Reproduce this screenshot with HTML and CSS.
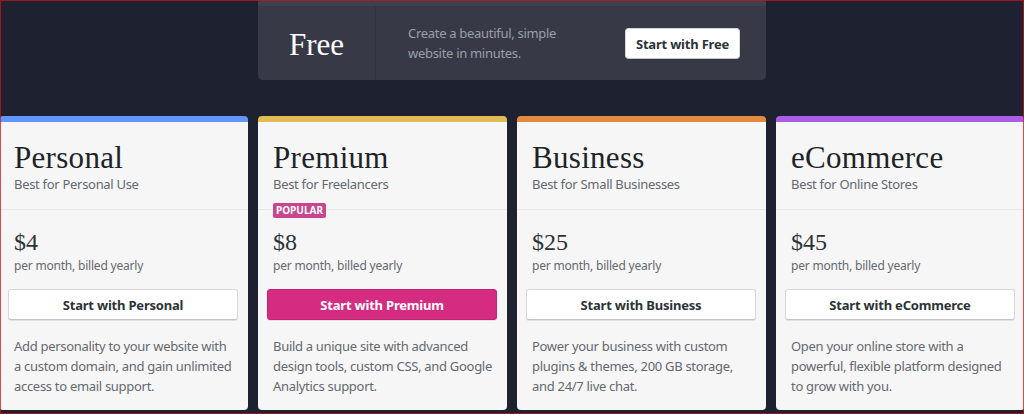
FILE: index.html
```html
<!DOCTYPE html>
<html lang="en">
<head>
<meta charset="utf-8">
<title>Plans</title>
<link rel="stylesheet" href="styles.css">
</head>
<body>
<div class="page">
  <div class="free-row">
    <div class="free-card">
      <div class="free-name">Free</div>
      <div class="free-body">
        <p class="free-desc">Create a beautiful, simple<br>website in minutes.</p>
        <button class="btn btn-free">Start with Free</button>
      </div>
    </div>
  </div>
  <div class="plans">
    <div class="plan plan-personal">
      <div class="plan-head">
        <h2 class="plan-name">Personal</h2>
        <div class="plan-sub">Best for Personal Use</div>
      </div>
      <div class="plan-body">
        <div class="price">$4</div>
        <div class="billing">per month, billed yearly</div>
        <button class="btn">Start with Personal</button>
        <p class="desc">Add personality to your website with a custom domain, and gain unlimited access to email support.</p>
      </div>
    </div>
    <div class="plan plan-premium">
      <div class="plan-head">
        <h2 class="plan-name">Premium</h2>
        <div class="plan-sub">Best for Freelancers</div>
      </div>
      <div class="plan-body">
        <span class="badge">Popular</span>
        <div class="price">$8</div>
        <div class="billing">per month, billed yearly</div>
        <button class="btn btn-primary">Start with Premium</button>
        <p class="desc">Build a unique site with advanced design tools, custom CSS, and Google Analytics support.</p>
      </div>
    </div>
    <div class="plan plan-business">
      <div class="plan-head">
        <h2 class="plan-name">Business</h2>
        <div class="plan-sub">Best for Small Businesses</div>
      </div>
      <div class="plan-body">
        <div class="price">$25</div>
        <div class="billing">per month, billed yearly</div>
        <button class="btn">Start with Business</button>
        <p class="desc">Power your business with custom plugins &amp; themes, 200 GB storage, and 24/7 live chat.</p>
      </div>
    </div>
    <div class="plan plan-ecommerce">
      <div class="plan-head">
        <h2 class="plan-name">eCommerce</h2>
        <div class="plan-sub">Best for Online Stores</div>
      </div>
      <div class="plan-body">
        <div class="price">$45</div>
        <div class="billing">per month, billed yearly</div>
        <button class="btn">Start with eCommerce</button>
        <p class="desc">Open your online store with a powerful, flexible platform designed to grow with you.</p>
      </div>
    </div>
  </div>
</div>
<div class="frame"></div>
</body>
</html>
```
FILE: styles.css
```css
* { box-sizing: border-box; }
html, body {
  margin: 0;
  padding: 0;
  background: #1e2230;
  height: 414px;
  overflow: hidden;
}
body {
  font-family: "Noto Sans", "Open Sans", sans-serif;
  color: #2c3338;
}
.page {
  width: 1026px;
  margin-left: -1px;
}
.free-row {
  display: grid;
  grid-template-columns: repeat(4, 249px);
  column-gap: 10px;
}
.free-card {
  grid-column: 2 / span 2;
  height: 80px;
  background: #373a46;
  border-top: 6px solid #3e414c;
  border-radius: 0 0 5px 5px;
  display: flex;
}
.free-name {
  width: 118px;
  border-right: 1px solid #31343f;
  display: flex;
  align-items: center;
  justify-content: center;
  font-family: "Liberation Serif", "Times New Roman", serif;
  font-size: 31px;
  color: #ffffff;
  padding-top: 3px;
}
.free-body {
  flex: 1;
  display: flex;
  align-items: center;
  justify-content: space-between;
  padding: 0 26px 0 32px;
}
.free-desc {
  margin: 0;
  font-size: 13px;
  letter-spacing: -0.3px;
  line-height: 20px;
  color: #9a9fa9;
}
.btn {
  display: block;
  width: 100%;
  height: 31px;
  border: 1px solid #d7d8da;
  border-bottom-color: #c3c4c7;
  border-radius: 3px;
  background: #ffffff;
  font-family: "Noto Sans", "Open Sans", sans-serif;
  font-size: 13px;
  font-weight: 700;
  letter-spacing: -0.2px;
  color: #2c3338;
  box-shadow: 0 1px 0 rgba(0,0,0,0.08);
  padding: 0;
}
.btn-free {
  width: 115px;
  border-radius: 4px;
  margin-top: 1px;
}
.btn-primary {
  background: #d52c82;
  border-color: #c4246f;
  color: #ffffff;
}
.plans {
  margin-top: 36px;
  display: grid;
  grid-template-columns: repeat(4, 249px);
  column-gap: 10px;
}
.plan {
  height: 294px;
  background: #f6f6f6;
  border-top: 6px solid #6396fb;
  border-radius: 4px;
}
.plan-premium { border-top-color: #e2bb55; }
.plan-business { border-top-color: #e48a3f; }
.plan-ecommerce { border-top-color: #a95ee5; }
.plan-head {
  padding: 18px 15px 15px;
  border-bottom: 1px solid #e7e7e7;
}
.plan-name {
  margin: 0 0 -2px;
  font-family: "Liberation Serif", "Times New Roman", serif;
  font-weight: 400;
  font-size: 31px;
  line-height: 36px;
  letter-spacing: 0.3px;
  color: #1d2327;
}
.plan-sub {
  font-size: 13px;
  letter-spacing: -0.3px;
  line-height: 20px;
  color: #646970;
}
.plan-body {
  position: relative;
  padding: 17px 15px 0;
}
.badge {
  position: absolute;
  left: 15px;
  top: -7px;
  height: 15px;
  padding: 0 3px;
  border-radius: 2px;
  background: #c9458d;
  color: #ffffff;
  font-size: 10px;
  font-weight: 700;
  line-height: 15px;
  text-transform: uppercase;
}
.price {
  font-family: "Liberation Serif", "Times New Roman", serif;
  font-size: 24px;
  line-height: 30px;
  color: #2c3338;
}
.billing {
  font-size: 12px;
  letter-spacing: -0.2px;
  line-height: 18px;
  color: #646970;
}
.plan .btn {
  width: calc(100% + 11px);
  margin: 14px 0 0 -6px;
}
.desc {
  margin: 16px 0 0;
  font-size: 13px;
  letter-spacing: -0.3px;
  line-height: 20px;
  color: #646970;
}
.frame {
  position: fixed;
  inset: 0;
  border: 1px solid rgba(205, 18, 24, 0.75);
  pointer-events: none;
}
```
